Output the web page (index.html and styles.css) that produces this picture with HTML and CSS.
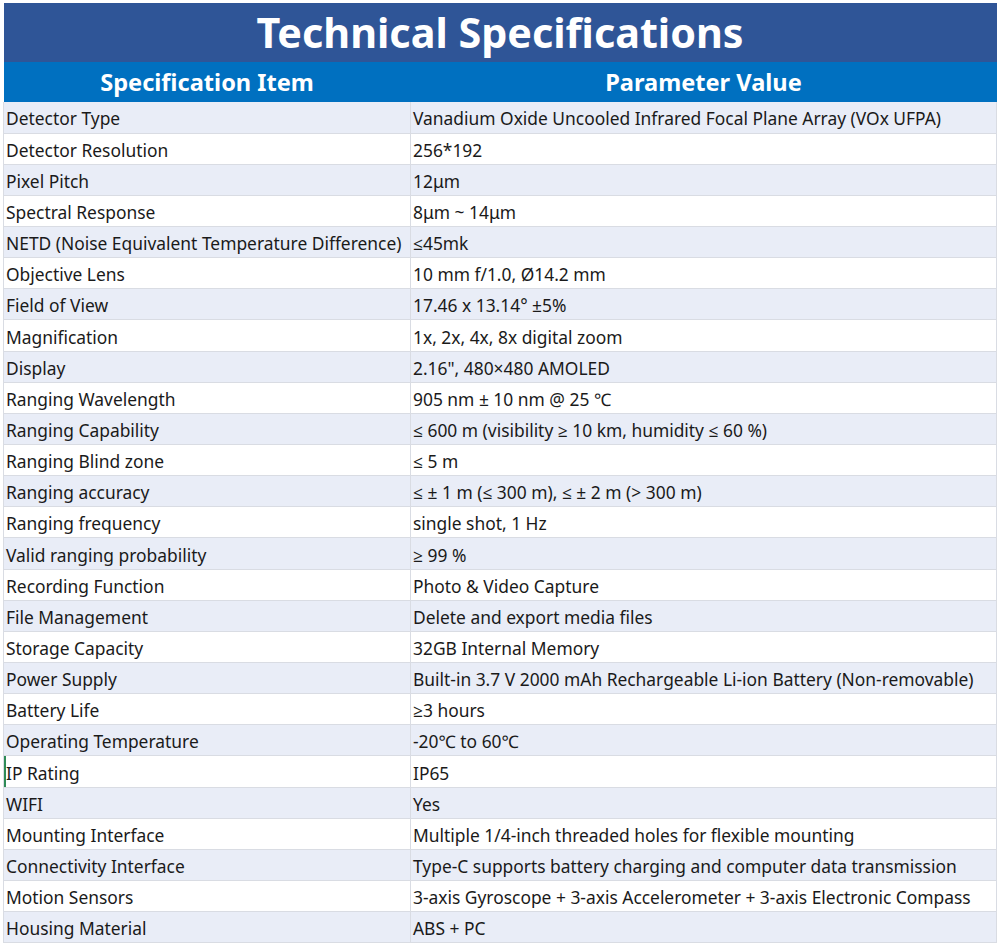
FILE: index.html
```html
<!DOCTYPE html>
<html lang="en">
<head>
<meta charset="utf-8">
<title>Technical Specifications</title>
<link rel="stylesheet" href="styles.css">
</head>
<body>
<div class="sheet">
  <table class="specs">
    <colgroup><col class="c1"><col class="c2"></colgroup>
    <thead>
      <tr class="title"><th colspan="2">Technical Specifications</th></tr>
      <tr class="head"><th>Specification Item</th><th>Parameter Value</th></tr>
    </thead>
    <tbody>
      <tr><td>Detector Type</td><td>Vanadium Oxide Uncooled Infrared Focal Plane Array (VOx UFPA)</td></tr>
      <tr><td>Detector Resolution</td><td>256*192</td></tr>
      <tr><td>Pixel Pitch</td><td>12μm</td></tr>
      <tr><td>Spectral Response</td><td>8μm ~ 14μm</td></tr>
      <tr><td>NETD (Noise Equivalent Temperature Difference)</td><td>≤45mk</td></tr>
      <tr><td>Objective Lens</td><td>10 mm f/1.0, Ø14.2 mm</td></tr>
      <tr><td>Field of View</td><td>17.46 x 13.14° ±5%</td></tr>
      <tr><td>Magnification</td><td>1x, 2x, 4x, 8x digital zoom</td></tr>
      <tr><td>Display</td><td>2.16", 480×480 AMOLED</td></tr>
      <tr><td>Ranging Wavelength</td><td>905 nm ± 10 nm @ 25 ℃</td></tr>
      <tr><td>Ranging Capability</td><td>≤ 600 m (visibility ≥ 10 km, humidity ≤ 60 %)</td></tr>
      <tr><td>Ranging Blind zone</td><td>≤ 5 m</td></tr>
      <tr><td>Ranging accuracy</td><td>≤ ± 1 m (≤ 300 m), ≤ ± 2 m (&gt; 300 m)</td></tr>
      <tr><td>Ranging frequency</td><td>single shot, 1 Hz</td></tr>
      <tr><td>Valid ranging probability</td><td>≥ 99 %</td></tr>
      <tr><td>Recording Function</td><td>Photo &amp; Video Capture</td></tr>
      <tr><td>File Management</td><td>Delete and export media files</td></tr>
      <tr><td>Storage Capacity</td><td>32GB Internal Memory</td></tr>
      <tr><td>Power Supply</td><td>Built-in 3.7 V 2000 mAh Rechargeable Li-ion Battery (Non-removable)</td></tr>
      <tr><td>Battery Life</td><td>≥3 hours</td></tr>
      <tr><td>Operating Temperature</td><td>-20℃ to 60℃</td></tr>
      <tr><td class="marked">IP Rating</td><td>IP65</td></tr>
      <tr><td>WIFI</td><td>Yes</td></tr>
      <tr><td>Mounting Interface</td><td>Multiple 1/4-inch threaded holes for flexible mounting</td></tr>
      <tr><td>Connectivity Interface</td><td>Type-C supports battery charging and computer data transmission</td></tr>
      <tr><td>Motion Sensors</td><td>3-axis Gyroscope + 3-axis Accelerometer + 3-axis Electronic Compass</td></tr>
      <tr><td>Housing Material</td><td>ABS + PC</td></tr>
    </tbody>
  </table>
</div>
</body>
</html>
```

FILE: styles.css
```css
html, body {
  margin: 0;
  padding: 0;
  background: #ffffff;
}

.sheet {
  padding: 3px 0 0 3px;
  width: 997px;
  height: 945px;
  border-right: 1px solid #dcdcdc;
  font-family: "Noto Sans", "Open Sans", sans-serif;
  color: #1a1a1a;
}

.specs {
  border-collapse: collapse;
  table-layout: fixed;
  width: 993px;
}

.c1 { width: 407px; }
.c2 { width: 586px; }

.title th {
  height: 59px;
  padding: 0;
  background: #2f5597;
  color: #ffffff;
  font-size: 41.3px;
  font-weight: 700;
  text-align: center;
  line-height: 59px;
}

.head th {
  height: 40px;
  padding: 0;
  background: #0070c0;
  color: #ffffff;
  font-size: 23.6px;
  font-weight: 700;
  text-align: center;
  line-height: 40px;
}

.specs td {
  height: 31.15px;
  padding: 3px 0 0 2px;
  box-sizing: border-box;
  font-size: 17.4px;
  line-height: 27px;
  vertical-align: middle;
  white-space: nowrap;
  border: 1px solid #d9dce3;
  border-top: none;
  overflow: hidden;
}

.specs tbody tr:nth-child(odd) td {
  background: #e9edf7;
}

.specs tbody tr:nth-child(even) td {
  background: #ffffff;
}

.specs td.marked {
  box-shadow: inset 2px 0 0 #2e8b57;
}
```
